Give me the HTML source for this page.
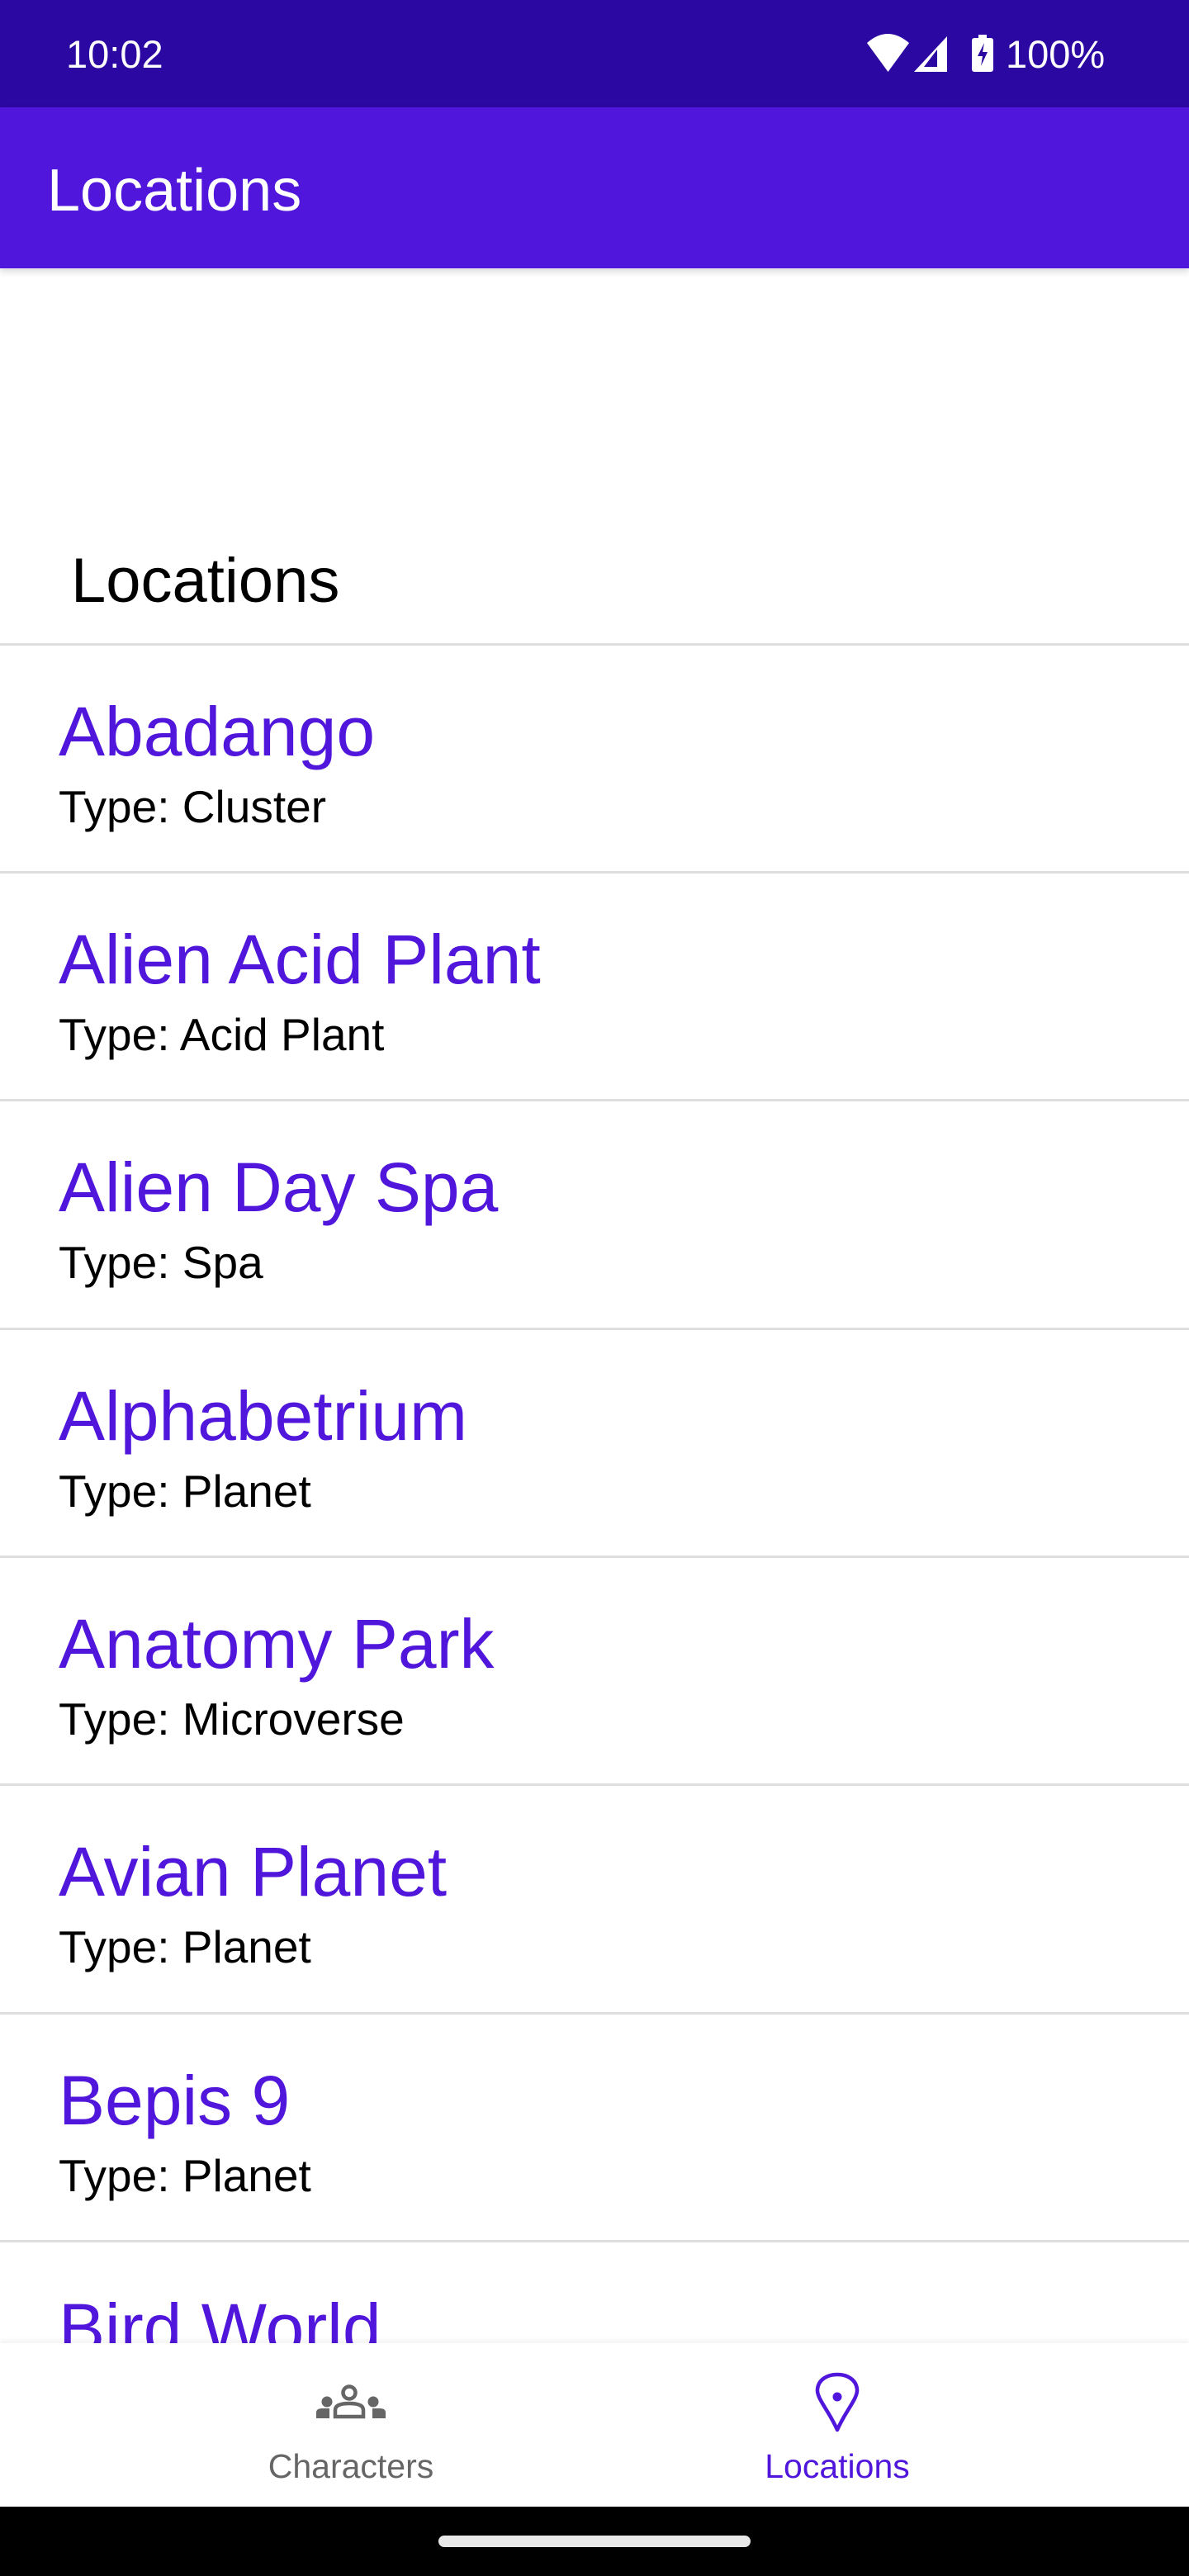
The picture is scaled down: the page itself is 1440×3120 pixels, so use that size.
<!DOCTYPE html>
<html><head><meta charset="utf-8"><style>
*{margin:0;padding:0;box-sizing:border-box}
body{width:1440px;height:3120px;position:relative;overflow:hidden;background:#fff;font-family:"Liberation Sans",sans-serif}
.a{position:absolute;white-space:nowrap;line-height:1}
.div{position:absolute;left:0;width:1440px;height:3px;background:#dedede}
.t{position:absolute;left:71px;font-size:84px;color:#5016db;line-height:1;white-space:nowrap}
.y{position:absolute;left:71px;font-size:55px;color:#000;line-height:1;white-space:nowrap}
</style></head><body>
<div style="position:absolute;left:0;top:0;width:1440px;height:130px;background:#2c08a2"></div>
<div class="a" style="left:80px;top:42px;font-size:47px;color:#fff">10:02</div>
<svg style="position:absolute;left:1040px;top:38px" width="180" height="56" viewBox="1040 38 180 56">
<path d="M1050 52 Q1075 30 1101 52 L1075.5 87 Z" fill="#fff"/>
<path d="M1147 44 L1147 87 L1107 87 Z" fill="#fff"/>
<path d="M1135 60 L1135 81 L1119 81 Z" fill="#2c08a2"/>
<rect x="1177" y="46" width="26" height="41" rx="3" fill="#fff"/>
<rect x="1185" y="42" width="10" height="5" fill="#fff"/>
<path d="M1192 52 L1184 68 L1190 68 L1188 80 L1196 63 L1190 63 Z" fill="#2c08a2"/>
</svg>
<div class="a" style="left:1218px;top:42px;font-size:47px;color:#fff">100%</div>
<div style="position:absolute;left:0;top:130px;width:1440px;height:195px;background:#5016db;box-shadow:0 4px 8px rgba(0,0,0,.15)"></div>
<div class="a" style="left:57px;top:195px;font-size:72px;color:#fff">Locations</div>

<div class="a" style="left:86px;top:666px;font-size:76px;color:#000">Locations</div>
<div class="div" style="top:779px"></div>

<div class="t" style="top:844px">Abadango</div><div class="y" style="top:950px">Type: Cluster</div>
<div class="div" style="top:1055px"></div>
<div class="t" style="top:1120px">Alien Acid Plant</div><div class="y" style="top:1226px">Type: Acid Plant</div>
<div class="div" style="top:1331px"></div>
<div class="t" style="top:1396px">Alien Day Spa</div><div class="y" style="top:1502px">Type: Spa</div>
<div class="div" style="top:1608px"></div>
<div class="t" style="top:1673px">Alphabetrium</div><div class="y" style="top:1779px">Type: Planet</div>
<div class="div" style="top:1884px"></div>
<div class="t" style="top:1949px">Anatomy Park</div><div class="y" style="top:2055px">Type: Microverse</div>
<div class="div" style="top:2160px"></div>
<div class="t" style="top:2225px">Avian Planet</div><div class="y" style="top:2331px">Type: Planet</div>
<div class="div" style="top:2437px"></div>
<div class="t" style="top:2502px">Bepis 9</div><div class="y" style="top:2608px">Type: Planet</div>
<div class="div" style="top:2713px"></div>
<div class="t" style="top:2778px">Bird World</div>

<div style="position:absolute;left:0;top:2838px;width:1440px;height:198px;background:#fff;box-shadow:0 -3px 6px rgba(0,0,0,.06)"></div>
<svg style="position:absolute;left:370px;top:2870px" width="110" height="70" viewBox="370 2870 110 70">
<circle cx="423" cy="2898" r="7.5" fill="none" stroke="#666" stroke-width="4.5"/>
<path d="M406 2927 L406 2919 Q406 2911 423 2911 Q440 2911 440 2919 L440 2927 Z" fill="none" stroke="#666" stroke-width="4.5"/>
<circle cx="396" cy="2909" r="6.5" fill="#666"/>
<circle cx="452" cy="2909" r="6.5" fill="#666"/>
<path d="M383 2929 L383 2922 Q383 2917 390 2917 L399 2917 L399 2929 Z" fill="#666"/>
<path d="M467 2929 L467 2922 Q467 2917 460 2917 L451 2917 L451 2929 Z" fill="#666"/>
</svg>
<svg style="position:absolute;left:980px;top:2870px" width="70" height="80" viewBox="980 2870 70 80">
<path d="M1014 2943 C1004 2920 989 2905 990 2894 C991 2882 1002 2876 1014 2876 C1026 2876 1037 2882 1038 2894 C1039 2905 1024 2920 1014 2943 Z" fill="none" stroke="#5016db" stroke-width="4.5" stroke-linejoin="round"/>
<circle cx="1014" cy="2903" r="5.5" fill="#5016db"/>
</svg>
<div class="a" style="left:425px;top:2967px;font-size:41px;color:#666;transform:translateX(-50%)">Characters</div>
<div class="a" style="left:1014px;top:2967px;font-size:41px;color:#5016db;transform:translateX(-50%)">Locations</div>

<div style="position:absolute;left:0;top:3036px;width:1440px;height:84px;background:#000"></div>
<div style="position:absolute;left:531px;top:3071px;width:378px;height:14px;border-radius:7px;background:#e8e8e8"></div>
</body></html>
